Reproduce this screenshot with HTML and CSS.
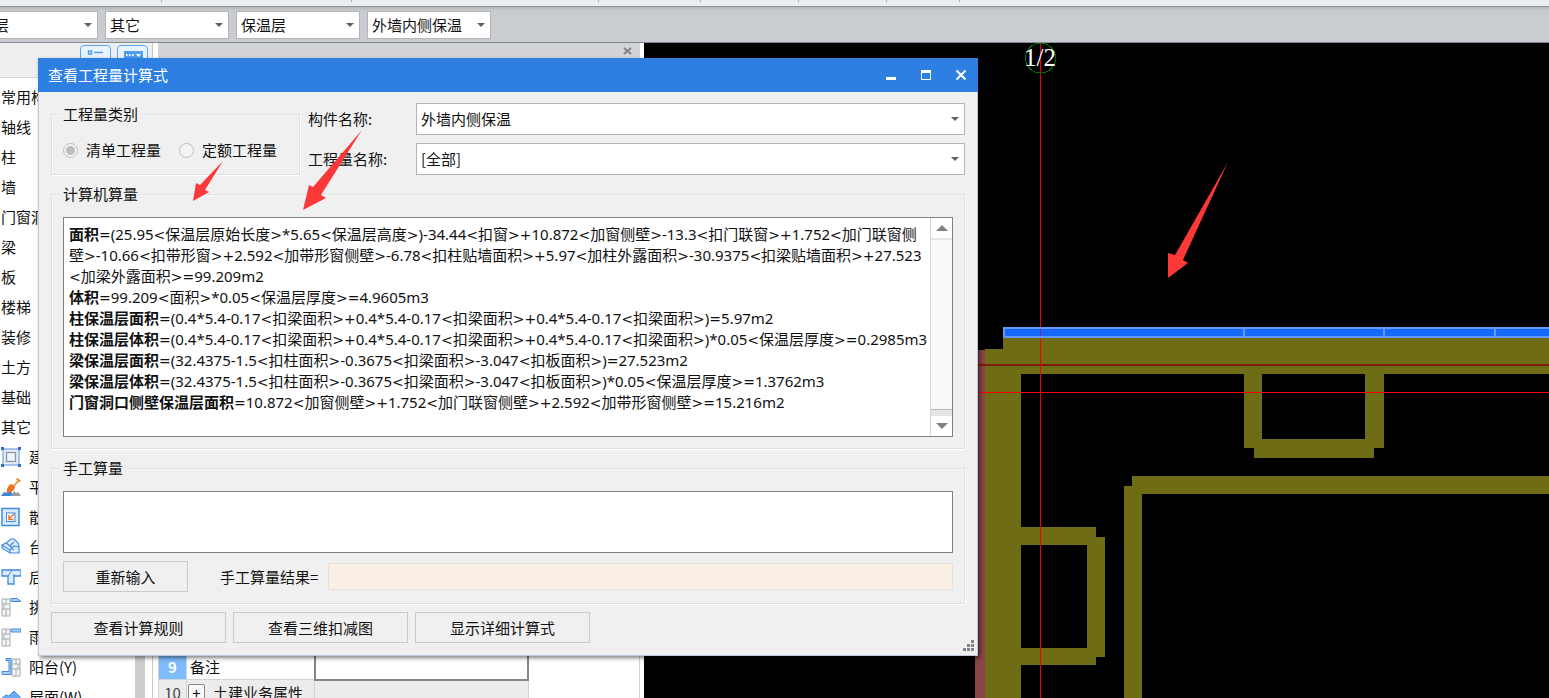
FILE: index.html
```html
<!DOCTYPE html>
<html lang="zh-CN">
<head>
<meta charset="utf-8">
<title>查看工程量计算式</title>
<link rel="stylesheet" href="styles.css">
</head>
<body>
<div class="app">
  <div class="ribbon">
    <span class="tick w162"></span><span class="tick w190"></span><span class="tick w247"></span><span class="tick w102"></span><span class="tick w98"></span><span class="tick w88"></span><span class="tick w73"></span>
  </div>
  <div class="toolbar">
    <div class="combo"><select aria-label="楼层"><option>首层</option></select></div>
    <div class="combo"><select aria-label="构件类别"><option>其它</option></select></div>
    <div class="combo"><select aria-label="构件类型"><option>保温层</option></select></div>
    <div class="combo"><select aria-label="构件"><option>外墙内侧保温</option></select></div>
  </div>
  <div class="workspace">
    <aside class="nav">
      <div class="nav-head">
        <button class="toggle" aria-label="列表"><svg width="20" height="16" viewBox="0 0 20 16"><g fill="none" stroke="#4f9ff0" stroke-width="1.5"><rect x="2.500" y="5" width="3" height="3"/><path d="M8 6.500h9M3 13h3M8 13h9"/></g></svg></button>
        <button class="toggle" aria-label="视图"><svg width="20" height="16" viewBox="0 0 20 16"><rect x="1" y="5" width="19" height="11" fill="#4f9ff0"/><path d="M3 8h1.500v2H3zM6 8h1.500v2H6zM9 8h1.500v2H9zM13 8h5l-2.500 3z" fill="#fff"/></svg></button>
      </div>
      <div class="nav-body">
        <ul class="nav-list">
          <li>常用构件</li><li>轴线</li><li>柱</li><li>墙</li><li>门窗洞</li><li>梁</li><li>板</li><li>楼梯</li><li>装修</li><li>土方</li><li>基础</li><li>其它</li>
          <li><svg class="ico" viewBox="0 0 20 20"><rect x="2" y="2" width="16" height="16" fill="#e3effb" stroke="#5a8fd0"/><rect x="5.500" y="5.500" width="9" height="9" fill="#eef3fa" stroke="#8b95a5" stroke-width="1.300"/><path d="M0 0h3v3H0zM17 0h3v3h-3zM0 17h3v3H0zM17 17h3v3h-3z" fill="#2f6fc0"/></svg>建筑</li>
          <li><svg class="ico" viewBox="0 0 20 20"><path d="M0 19l3-4 2 1 3-4 3 4 2 3z" fill="#3b86dc"/><path d="M10 19l3-5 2 2 2-1 3 4z" fill="#9a9fa5"/><path d="M12 10l6-7M15.500 1.500l4 3" stroke="#f28432" stroke-width="1.600" fill="none"/><path d="M8 8l3-1 3 3-1 3-3 2-4 1 0-4z" fill="#ee7421"/></svg>平整</li>
          <li><svg class="ico" viewBox="0 0 20 20"><rect x="1" y="1.500" width="17" height="17" fill="#d9ebfd" stroke="#3f8ae0" stroke-width="1.500"/><rect x="5.500" y="6" width="8.500" height="8.500" fill="#fff" stroke="#3f8ae0"/><path d="M13 7l-4.500 4.500M8 8v4.500h4.500" fill="none" stroke="#ee7421" stroke-width="1.500"/></svg>散水</li>
          <li><svg class="ico" viewBox="0 0 20 20"><path d="M1 8l4-2 5-4h3l4 4 1 3v7H9l-8-5z" fill="#e1effd" stroke="#3f8ae0" stroke-width="1.200"/><path d="M1 8l8 5v3M9 13l4-4 5 1M5 6l4 3 4-4M9 9l4 4" fill="none" stroke="#3f8ae0" stroke-width="1.200"/></svg>台阶</li>
          <li><svg class="ico" viewBox="0 0 20 20"><path d="M1 3h19v6h-7v8H7V9H1z" fill="#d9ebfd" stroke="#3f8ae0" stroke-width="1.300"/><path d="M7 9l4-6M13 9V7" stroke="#3f8ae0" fill="none"/></svg>后浇</li>
          <li><svg class="ico" viewBox="0 0 20 20"><path d="M1 2h8v17H1zM1 7h8M1 12h8M5 12v7M5 2v5M3 7v5" fill="#f5f5f5" stroke="#a6aaae"/><path d="M10 1.500h6l4 3H10z" fill="#a8d0fa" stroke="#3f8ae0"/></svg>挑檐</li>
          <li><svg class="ico" viewBox="0 0 20 20"><path d="M1 2h8v17H1zM1 7h8M1 12h8M5 12v7M5 2v5M3 7v5" fill="#f5f5f5" stroke="#a6aaae"/><path d="M10 2h10v3H10z" fill="#a8d0fa" stroke="#3f8ae0"/></svg>雨篷</li>
          <li><svg class="ico" viewBox="0 0 20 20"><path d="M11 2h8v17h-8zM11 7h8M11 12h8M15 12v7M15 2v5M17 7v5" fill="#f5f5f5" stroke="#a6aaae"/><path d="M5 1.500h5v16H1v-3h7v-11H5z" fill="#a8d0fa" stroke="#3f8ae0"/></svg>阳台(Y)</li>
          <li><svg class="ico" viewBox="0 0 20 20"><path d="M0 12l5-4 3 1 5-5 6 6v8H0z" fill="#6aadf2" stroke="#3f8ae0"/></svg>屋面(W)</li>
        </ul>
        <div class="nav-scroll"></div>
      </div>
    </aside>
    <section class="props">
      <div class="props-bar"><button class="props-close" aria-label="关闭"><svg width="9" height="8" viewBox="0 0 9 8"><path d="M1 1l7 6M8 1L1 7" stroke="#808080" stroke-width="2"/></svg></button></div>
      <div class="props-body">
        <table class="grid">
          <tr><th class="num on">9</th><td class="name">备注</td><td class="val focus"></td></tr>
          <tr><th class="num">10</th><td class="name group"><button class="plus" aria-label="展开">+</button>土建业务属性</td><td class="val off"></td></tr>
        </table>
      </div>
    </section>
    <main class="drawing">
      <svg viewBox="644 43 905 655" preserveAspectRatio="xMinYMin slice" shape-rendering="crispEdges">
        <rect x="975" y="350" width="10" height="348" fill="#8c4546"/>
        <g fill="#6e6d15">
          <rect x="985" y="349" width="36" height="349"/>
          <rect x="1003" y="338" width="546" height="36"/>
          <path d="M1244 374h18v65h103v-65h19v74h-10v10h-120v-10h-10z"/>
          <path d="M1132 476h417v18h-407v204h-18V486h8z"/>
          <path d="M1021 527h75v10h9v120h-9v8h-75v-17h66V545h-66z"/>
        </g>
        <path d="M978 365h571" stroke="#7d1b0c" stroke-width="2"/>
        <path d="M978 392.500h571M1040.500 43v655" stroke="#f40000"/>
        <rect x="1004" y="328" width="560" height="9" fill="#1668ff" stroke="#6299fb" stroke-width="2"/>
        <path d="M1244 327v11M1384 327v11M1495 327v11" stroke="#6299fb" stroke-width="2"/>
        <path d="M1040.500 329v7" stroke="#8a2090"/>
        <circle cx="1040.500" cy="58" r="15" fill="none" stroke="#0b6b0b"/>
        <text x="1040" y="66" text-anchor="middle" class="axis">1/2</text>
      </svg>
    </main>
  </div>

  <div class="dialog" role="dialog" aria-labelledby="dlg-title">
    <header class="titlebar">
      <h1 id="dlg-title">查看工程量计算式</h1>
      <button aria-label="最小化"><svg width="12" height="12" viewBox="0 0 12 12"><path d="M1 9.500h10" stroke="#fff" stroke-width="3"/></svg></button>
      <button aria-label="最大化"><svg width="12" height="12" viewBox="0 0 12 12"><path d="M1.500 3v7.500h9V3" fill="none" stroke="#fff"/><path d="M1 2.500h10" stroke="#fff" stroke-width="3"/></svg></button>
      <button aria-label="关闭窗口"><svg width="12" height="12" viewBox="0 0 12 12"><path d="M1.500 1.500l9 9M10.500 1.500l-9 9" stroke="#fff" stroke-width="2"/></svg></button>
    </header>
    <div class="content">
      <div class="top">
        <fieldset class="kind">
          <legend>工程量类别</legend>
          <div class="radios">
            <label><input type="radio" name="kind" checked>清单工程量</label>
            <label><input type="radio" name="kind">定额工程量</label>
          </div>
        </fieldset>
        <div class="fields">
          <label for="part">构件名称:</label>
          <div class="combo"><select id="part"><option>外墙内侧保温</option></select></div>
          <label for="qty">工程量名称:</label>
          <div class="combo"><select id="qty"><option>[全部]</option></select></div>
        </div>
      </div>
      <fieldset>
        <legend>计算机算量</legend>
        <div class="result">
          <div class="formulas" role="textbox" aria-readonly="true" aria-multiline="true" aria-label="计算机算量">
            <p><b>面积</b>=(25.95&lt;保温层原始长度&gt;*5.65&lt;保温层高度&gt;)-34.44&lt;扣窗&gt;+10.872&lt;加窗侧壁&gt;-13.3&lt;扣门联窗&gt;+1.752&lt;加门联窗侧<br>壁&gt;-10.66&lt;扣带形窗&gt;+2.592&lt;加带形窗侧壁&gt;-6.78&lt;扣柱贴墙面积&gt;+5.97&lt;加柱外露面积&gt;-30.9375&lt;扣梁贴墙面积&gt;+27.523<br>&lt;加梁外露面积&gt;=99.209m2</p>
            <p><b>体积</b>=99.209&lt;面积&gt;*0.05&lt;保温层厚度&gt;=4.9605m3</p>
            <p><b>柱保温层面积</b>=(0.4*5.4-0.17&lt;扣梁面积&gt;+0.4*5.4-0.17&lt;扣梁面积&gt;+0.4*5.4-0.17&lt;扣梁面积&gt;)=5.97m2</p>
            <p><b>柱保温层体积</b>=(0.4*5.4-0.17&lt;扣梁面积&gt;+0.4*5.4-0.17&lt;扣梁面积&gt;+0.4*5.4-0.17&lt;扣梁面积&gt;)*0.05&lt;保温层厚度&gt;=0.2985m3</p>
            <p><b>梁保温层面积</b>=(32.4375-1.5&lt;扣柱面积&gt;-0.3675&lt;扣梁面积&gt;-3.047&lt;扣板面积&gt;)=27.523m2</p>
            <p><b>梁保温层体积</b>=(32.4375-1.5&lt;扣柱面积&gt;-0.3675&lt;扣梁面积&gt;-3.047&lt;扣板面积&gt;)*0.05&lt;保温层厚度&gt;=1.3762m3</p>
            <p><b>门窗洞口侧壁保温层面积</b>=10.872&lt;加窗侧壁&gt;+1.752&lt;加门联窗侧壁&gt;+2.592&lt;加带形窗侧壁&gt;=15.216m2</p>
          </div>
          <div class="scroll">
            <button aria-label="向上滚动"><svg width="12" height="6" viewBox="0 0 12 6"><path d="M0 6l6-6 6 6z" fill="#808080"/></svg></button>
            <div class="thumb"></div>
            <button aria-label="向下滚动"><svg width="12" height="6" viewBox="0 0 12 6"><path d="M0 0l6 6 6-6z" fill="#808080"/></svg></button>
          </div>
        </div>
      </fieldset>
      <fieldset>
        <legend>手工算量</legend>
        <textarea aria-label="手工算量"></textarea>
        <div class="manual">
          <button class="btn small">重新输入</button>
          <label for="sum">手工算量结果=</label>
          <input id="sum" type="text" readonly>
        </div>
      </fieldset>
      <div class="actions">
        <button class="btn">查看计算规则</button>
        <button class="btn">查看三维扣减图</button>
        <button class="btn">显示详细计算式</button>
      </div>
    </div>
    <svg class="grip" width="11" height="11" viewBox="0 0 11 11"><path d="M8 0h3v3H8zM4 4h3v3H4zM8 4h3v3H8zM0 8h3v3H0zM4 8h3v3H4zM8 8h3v3H8z" fill="#80858c"/></svg>
  </div>

  <svg class="marks" width="1549" height="698" viewBox="0 0 1549 698" aria-hidden="true">
    <g fill="#fc3838">
      <path d="M193 201l3-18 4 2 23-24-18 29 4 2z"/>
      <path d="M303 210l6-25 4 2 49-57-41 65 5 3z"/>
      <path d="M1168 278v-25l7 2 53-93-45 98 5 3z"/>
    </g>
  </svg>
</div>
<script src="script.js"></script>
</body>
</html>
```

FILE: styles.css
```css
* { box-sizing: border-box; }

body {
  margin: 0;
  font: 15px/22px "Noto Sans CJK SC", sans-serif;
  color: #111;
  background: #fff;
}

button, select, input, textarea { font: inherit; color: inherit; margin: 0; }
button { padding: 0; border: 0; background: none; }

.app {
  position: relative;
  display: flex;
  flex-direction: column;
  height: 100vh;
  overflow: hidden;
}

.ribbon {
  display: flex;
  flex: none;
  height: 6px;
  background: #e9edee;
}
.tick { height: 2px; border-right: 1px solid #a9adb0; }
.w162 { width: 162px; }
.w190 { width: 190px; }
.w247 { width: 247px; }
.w102 { width: 102px; }
.w98 { width: 98px; }
.w88 { width: 88px; }
.w73 { width: 73px; }

.toolbar {
  display: flex;
  flex: none;
  gap: 7px;
  height: 37px;
  margin: 0;
  padding: 4px 0 0;
  border-top: 1px solid #8d9294;
  border-bottom: 1px solid #84898d;
  background: linear-gradient(#b4b8bb, #c9ccd0 4px);
}
.toolbar .combo { flex: 0 0 124px; height: 28px; }
.toolbar .combo:first-child { margin-left: -26px; }

.combo { position: relative; }
.combo::after {
  content: "";
  position: absolute;
  right: 6px;
  top: 50%;
  margin-top: -2px;
  border: solid transparent;
  border-width: 4px 4px 0;
  border-top-color: #606060;
  pointer-events: none;
}
.combo select {
  display: block;
  width: 100%;
  height: 100%;
  padding: 0 16px 0 4px;
  appearance: none;
  border: 1px solid #b4b4b4;
  border-radius: 0;
  background: #fff;
}

.workspace { display: flex; flex: 1; min-height: 0; }

.nav {
  display: flex;
  flex-direction: column;
  flex: 0 0 153px;
  border-right: 1px solid #c8c8c8;
}
.nav-head {
  display: flex;
  flex: none;
  gap: 6px;
  justify-content: flex-end;
  height: 35px;
  padding: 2px 4px 0 0;
  border-bottom: 1px solid #d5d5d5;
  background: #efefef;
}
.toggle {
  display: flex;
  justify-content: center;
  width: 31px;
  height: 28px;
  border: 1px solid #5aa7f5;
  border-radius: 4px;
  background: #e8f3fe;
}
.nav-body { display: flex; flex: 1; min-height: 0; padding-right: 7px; }
.nav-list {
  flex: 1;
  margin: 0;
  padding: 4px 0 0 1px;
  overflow: hidden;
  list-style: none;
}
.nav-list li {
  display: flex;
  align-items: center;
  height: 30px;
  white-space: nowrap;
}
.ico { flex: none; width: 20px; height: 20px; margin-right: 8px; }
.nav-scroll { flex: 0 0 10px; background: #cdcdcd; }

.props {
  display: flex;
  flex-direction: column;
  flex: 0 0 482px;
  margin: 0 4px 0 5px;
  border-right: 1px solid #d0d3d8;
}
.props-bar {
  display: flex;
  flex: none;
  align-items: flex-start;
  justify-content: flex-end;
  height: 24px;
  padding: 4px 7px 0 0;
  background: #d3d4d9;
}
.props-close { line-height: 0; padding: 0; }
.props-body {
  display: flex;
  flex: 1;
  flex-direction: column;
  justify-content: flex-end;
  min-height: 0;
  overflow: hidden;
}
.grid {
  width: 371px;
  margin-bottom: -8px;
  border-collapse: collapse;
  table-layout: fixed;
}
.grid tr { height: 26px; }
.grid th, .grid td { padding: 0; border: 1px solid #cfd4da; line-height: 22px; text-align: left; font-weight: 400; }
.grid .num { width: 28px; text-align: center; color: #444; background: #ececec; }
.grid .on { color: #fff; font-weight: 700; background: #7ebbfb; }
.grid .name { width: 128px; padding-left: 3px; white-space: nowrap; }
.grid .group { padding-left: 1px; background: #ececec; }
.grid .focus { border: 2px solid #858585; }
.grid .off { background: #ececec; }
.plus {
  width: 17px;
  height: 17px;
  margin-right: 8px;
  border: 1px solid #8a8a8a;
  border-radius: 2px;
  background: #f8f8f8;
  line-height: 14px;
}

.drawing { flex: 1; min-width: 0; background: #000; overflow: hidden; }
.drawing svg { display: block; width: 100%; height: 100%; }
.axis { font: 25px "Liberation Serif", serif; fill: #fff; }

.dialog {
  position: absolute;
  left: 38px;
  top: 58px;
  width: 940px;
  border: solid #bcc8d8;
  border-width: 0 1px 1px;
  background: #f0f0f0;
  box-shadow: 2px 2px 4px rgba(0, 0, 0, .5);
}
.titlebar {
  display: flex;
  align-items: center;
  height: 34px;
  margin: 0 -1px;
  padding-left: 10px;
  color: #fff;
  background: #2d80e2;
}
.titlebar h1 { flex: 1; margin: 0; font-size: 15px; font-weight: 400; }
.titlebar button { display: flex; align-items: center; justify-content: center; width: 35px; height: 34px; }

.content {
  display: flex;
  flex-direction: column;
  gap: 8px;
  padding: 11px 12px 12px;
}
.top { display: flex; gap: 8px; }

fieldset {
  min-width: 0;
  margin: 0;
  padding: 12px 11px 11px;
  border: 1px solid #e0e0e0;
  box-shadow: 1px 1px #fff, inset 1px 1px #fafafa;
}
legend { margin-left: -3px; padding: 0 3px; line-height: 22px; background: #f0f0f0; }

.kind { flex: 0 0 249px; }
.radios { display: flex; gap: 18px; white-space: nowrap; }
.radios label { display: flex; align-items: center; gap: 8px; height: 26px; }
.radios input {
  flex: none;
  width: 15px;
  height: 15px;
  appearance: none;
  border: 1px solid #bdbdbd;
  border-radius: 50%;
  background: #f3f3f3;
}
.radios input:checked { background: radial-gradient(#bdbdbd 4px, #f3f3f3 5px); }

.fields {
  display: grid;
  flex: 1;
  grid-template-columns: 108px 1fr;
  grid-auto-rows: 32px;
  gap: 8px 0;
  align-items: center;
}
.fields .combo { height: 32px; }

.result { display: flex; height: 220px; border: 1px solid #828282; background: #fff; }
.formulas {
  flex: 1;
  padding: 6px 0 0 5px;
  font-family: "Noto Sans", "Noto Sans CJK SC", sans-serif;
  line-height: 21px;
  white-space: nowrap;
  overflow: hidden;
}
.formulas p { margin: 0; }
.op { font: 14px/1 "DejaVu Sans", sans-serif; }
.scroll {
  display: flex;
  flex: 0 0 22px;
  flex-direction: column;
  border-left: 1px solid #d5d5d5;
  background: #e4e4e4;
}
.scroll button { display: flex; align-items: center; justify-content: center; flex: 0 0 20px; background: #fff; }
.thumb { flex: 1; margin: 2px 0 6px; border-bottom: 1px solid #b8b8b8; background: #f9f9f9; }

textarea {
  display: block;
  width: 100%;
  height: 62px;
  padding: 4px;
  resize: none;
  border: 1px solid #828282;
  background: #fff;
}
.manual { display: flex; align-items: center; margin-top: 8px; }
.manual label { margin: 0 10px 0 32px; }
.manual input { flex: 1; height: 27px; border: 1px solid #e3e3e3; background: #faefe4; }

.btn { width: 175px; height: 31px; border: 1px solid #cacaca; background: #f0f0f0; }
.small { width: 125px; }
.actions { display: flex; gap: 7px; }

.grip { position: absolute; right: 3px; bottom: 4px; }
.marks { position: absolute; left: 0; top: 0; pointer-events: none; }
```

FILE: script.js
```js
// Wraps the wide operators of each formula so they can take their own font.
document.querySelectorAll('.formulas p').forEach(function (p) {
  Array.from(p.childNodes).forEach(function (node) {
    if (node.nodeType !== Node.TEXT_NODE) return;
    var part = document.createDocumentFragment();
    node.textContent.split(/([<>=+])/).forEach(function (piece) {
      if (/^[<>=+]$/.test(piece)) {
        var op = document.createElement('span');
        op.className = 'op';
        op.textContent = piece;
        part.appendChild(op);
      } else {
        part.appendChild(document.createTextNode(piece));
      }
    });
    node.replaceWith(part);
  });
});
```
